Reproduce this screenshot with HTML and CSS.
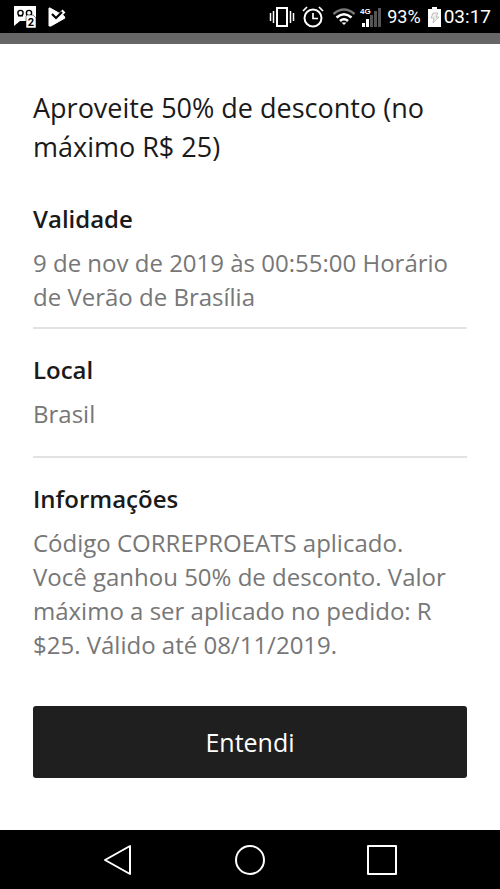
FILE: index.html
```html
<!DOCTYPE html>
<html lang="pt-BR">
<head>
<meta charset="utf-8">
<meta name="viewport" content="width=device-width, initial-scale=1">
<title>Promoção</title>
<link rel="stylesheet" href="styles.css">
</head>
<body>
<header class="status">
  <div class="status-group notices">
    <svg width="22" height="23" viewBox="0 0 22 23" aria-hidden="true">
      <path d="M0 1h22v15H6l-6 5z" fill="#fff"/>
      <g fill="none" stroke="#000" stroke-width="1.4"><circle cx="6.500" cy="8" r="2.600"/><circle cx="15" cy="8" r="2.600"/><path d="M4 10.700h5M12.500 10.700h5"/></g>
      <path d="M13 10h6l3 3v10H12V11z" fill="#fff" stroke="#000" stroke-width=".5"/>
      <text x="17" y="21" class="badge">2</text>
    </svg>
    <svg width="18" height="20" viewBox="0 0 18 20" aria-hidden="true">
      <path d="M2 1l14 8 1 2L3 19H1V1z" fill="#fff" stroke="#fff" stroke-linejoin="round"/>
      <path d="M4 8l4 4 8-8" fill="none" stroke="#fff" stroke-width="4"/>
      <path d="M4 7l4 4 6-6" fill="none" stroke="#000" stroke-width="2.200"/>
    </svg>
  </div>
  <div class="status-group">
    <svg width="26" height="22" viewBox="0 0 26 22" fill="none" stroke="#fff" aria-hidden="true">
      <rect x="8" y="2" width="10" height="18" stroke-width="2"/><path d="M4.500 5v12M21.500 5v12" stroke-width="1.500"/><path d="M1.500 7v8M24.500 7v8" stroke-width="1.500"/>
    </svg>
    <svg class="alarm" width="22" height="22" viewBox="0 0 22 22" fill="none" stroke="#fff" stroke-width="2" aria-hidden="true">
      <circle cx="11" cy="12" r="8.500"/><path d="M11 7v5.500h5M1 5l4-4M21 5l-4-4" stroke-width="1.700"/>
    </svg>
    <svg class="wifi" width="24" height="20" viewBox="0 0 24 20" fill="none" stroke="#fff" stroke-width="2.600" aria-hidden="true">
      <path d="M1.500 7Q12-2 22.500 7" stroke="#777"/><path d="M4.500 10.500Q12 4 19.500 10.500M8 14Q12 10.500 16 14"/><path d="M9.500 15.500h5L12 18z" fill="#fff" stroke="none"/>
    </svg>
    <svg class="signal" width="22" height="22" viewBox="0 0 22 22" aria-hidden="true">
      <text x="0" y="8" class="network">4G</text>
      <path d="M2 17h3v4H2zM6 13h3v8H6z" fill="#fff"/><path d="M10 9h3v12h-3zM14 5h3v16h-3zM18 2h3v19h-3z" fill="#555"/>
    </svg>
    <span class="percent">93%</span>
    <svg class="battery" width="13" height="20" viewBox="0 0 13 20" aria-hidden="true">
      <path d="M4 0h5v2h4v18H0V2h4z" fill="#fff"/><path d="M5 6h5l-2 4h3l-6 6 1-5H3z" fill="#eee" stroke="#aaa" stroke-width=".7"/>
    </svg>
    <time class="clock">03:17</time>
  </div>
</header>
<main class="sheet">
  <h1 class="title">Aproveite 50% de desconto (no máximo R$ 25)</h1>
  <section class="detail">
    <h2 class="label">Validade</h2>
    <p class="value">9 de nov de 2019 às 00:55:00 Horário de Verão de Brasília</p>
  </section>
  <section class="detail roomy">
    <h2 class="label">Local</h2>
    <p class="value">Brasil</p>
  </section>
  <section class="detail">
    <h2 class="label">Informações</h2>
    <p class="value">Código CORREPROEATS aplicado.<br>Você ganhou 50% de desconto. Valor<br>máximo a ser aplicado no pedido: R<br>$25. Válido até 08/11/2019.</p>
  </section>
  <button class="confirm" type="button">Entendi</button>
</main>
<nav class="system" aria-label="Sistema">
  <button type="button" aria-label="Voltar"><svg width="32" height="32" viewBox="0 0 32 32"><path d="M28 2v28L3 16z"/></svg></button>
  <button type="button" aria-label="Início"><svg width="32" height="32" viewBox="0 0 32 32"><circle cx="16" cy="16" r="14"/></svg></button>
  <button type="button" aria-label="Recentes"><svg width="32" height="32" viewBox="0 0 32 32"><path d="M2 2h28v28H2z"/></svg></button>
</nav>
</body>
</html>
```
FILE: styles.css
```css
* { box-sizing: border-box; }
body {
  margin: 0;
  min-height: 100vh;
  display: flex;
  flex-direction: column;
  background: #fff;
  color: #1a1a1a;
  font-family: "Open Sans", "Noto Sans", sans-serif;
}
.status {
  display: flex;
  align-items: center;
  justify-content: space-between;
  height: 44px;
  padding: 0 9px 0 14px;
  border-bottom: 11px solid #666;
  background: #000;
  color: #fff;
  font-family: Roboto, sans-serif;
}
.status-group { display: flex; align-items: center; }
.notices { gap: 12px; }
.alarm { margin-left: 7px; }
.wifi { margin-left: 8px; }
.signal { margin-left: 4px; }
.percent { margin: 0 7px 0 5px; font-size: 18px; }
.clock { margin-left: 3px; font-size: 19px; }
.badge { font: bold 11px Roboto, sans-serif; text-anchor: middle; }
.network { font: bold 8px "Liberation Sans", sans-serif; fill: #fff; }
.sheet {
  flex: 1;
  display: flex;
  flex-direction: column;
  padding: 44px 33px 52px;
}
.title {
  margin: 0 0 12px;
  font-size: 27px;
  font-weight: 400;
  line-height: 39px;
}
.detail { padding: 24px 0 13px; }
.detail + .detail { border-top: 2px solid #e2e2e2; }
.roomy { padding-bottom: 25px; }
.label {
  margin: 0 0 10px;
  font-size: 24px;
  font-weight: 600;
  line-height: 34px;
}
.value {
  margin: 0;
  color: #777;
  font-size: 24px;
  font-weight: 400;
  line-height: 34px;
}
.confirm {
  height: 72px;
  margin-top: 31px;
  border: 0;
  border-radius: 3px;
  background: #1f1f1f;
  color: #fff;
  font: 500 25px "Open Sans", sans-serif;
}
.system {
  display: flex;
  align-items: center;
  justify-content: center;
  gap: 100px;
  height: 59px;
  background: #000;
}
.system button {
  display: flex;
  padding: 0;
  border: 0;
  background: none;
}
.system svg { fill: none; stroke: #fff; stroke-width: 2; stroke-linejoin: round; }
```
